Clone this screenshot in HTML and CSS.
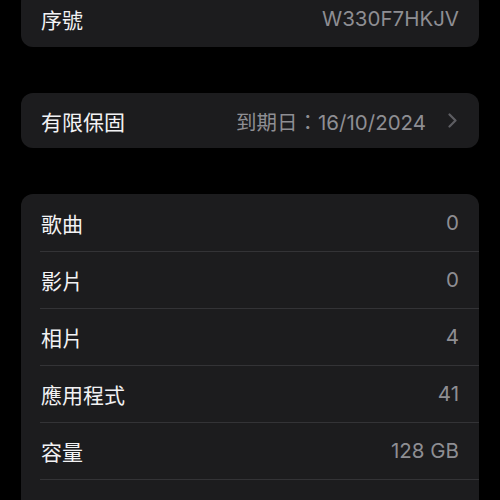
FILE: index.html
```html
<!DOCTYPE html>
<html lang="zh-Hant">
<head>
<meta charset="utf-8">
<link rel="stylesheet" href="styles.css">
</head>
<body>
<main class="page">
  <section class="card card-first">
    <div class="row"><span class="label">序號</span><span class="value">W330F7HKJV</span></div>
  </section>
  <section class="card card-warranty">
    <div class="row"><span class="label">有限保固</span><span class="value">到期日：16/10/2024</span>
      <svg class="chev" width="9" height="15" viewBox="0 0 9 15"><path d="M1.5 1.5 L7.5 7.5 L1.5 13.5" fill="none" stroke="#5d5d62" stroke-width="2.2" stroke-linecap="round" stroke-linejoin="round"/></svg>
    </div>
  </section>
  <section class="card card-list">
    <div class="row"><span class="label">歌曲</span><span class="value">0</span></div>
    <div class="row"><span class="label">影片</span><span class="value">0</span></div>
    <div class="row"><span class="label">相片</span><span class="value">4</span></div>
    <div class="row"><span class="label">應用程式</span><span class="value">41</span></div>
    <div class="row"><span class="label">容量</span><span class="value">128 GB</span></div>
    <div class="row"><span class="label">可用空間</span><span class="value">96.5 GB</span></div>
  </section>
</main>
</body>
</html>
```
FILE: styles.css
```css
html, body {
  margin: 0;
  padding: 0;
  background: #000;
}
body {
  font-family: "Inter", "Noto Sans CJK TC", sans-serif;
  color: #fff;
  overflow: hidden;
  height: 500px;
}
.page {
  padding: 0 21px;
  margin-top: -10px;
  display: flex;
  flex-direction: column;
  gap: 46px;
}
.card {
  background: #1c1c1e;
  border-radius: 12px;
  overflow: hidden;
}
.row {
  height: 57px;
  display: flex;
  align-items: center;
  padding: 0 20px;
  position: relative;
}
.card-list .row + .row::before {
  content: "";
  position: absolute;
  top: 0;
  left: 19px;
  right: 0;
  height: 1px;
  background: #333336;
}
.card-list .row:last-child {
  padding-top: 4px;
}
.card-warranty .row {
  height: 55px;
}
.label {
  flex: 1;
  font-family: "Noto Sans CJK TC", sans-serif;
  font-size: 21px;
  color: #f2f2f4;
}
.value {
  font-size: 20.5px;
  color: #8e8e93;
}
.chev {
  margin-left: 22px;
  margin-right: 2px;
}
```
